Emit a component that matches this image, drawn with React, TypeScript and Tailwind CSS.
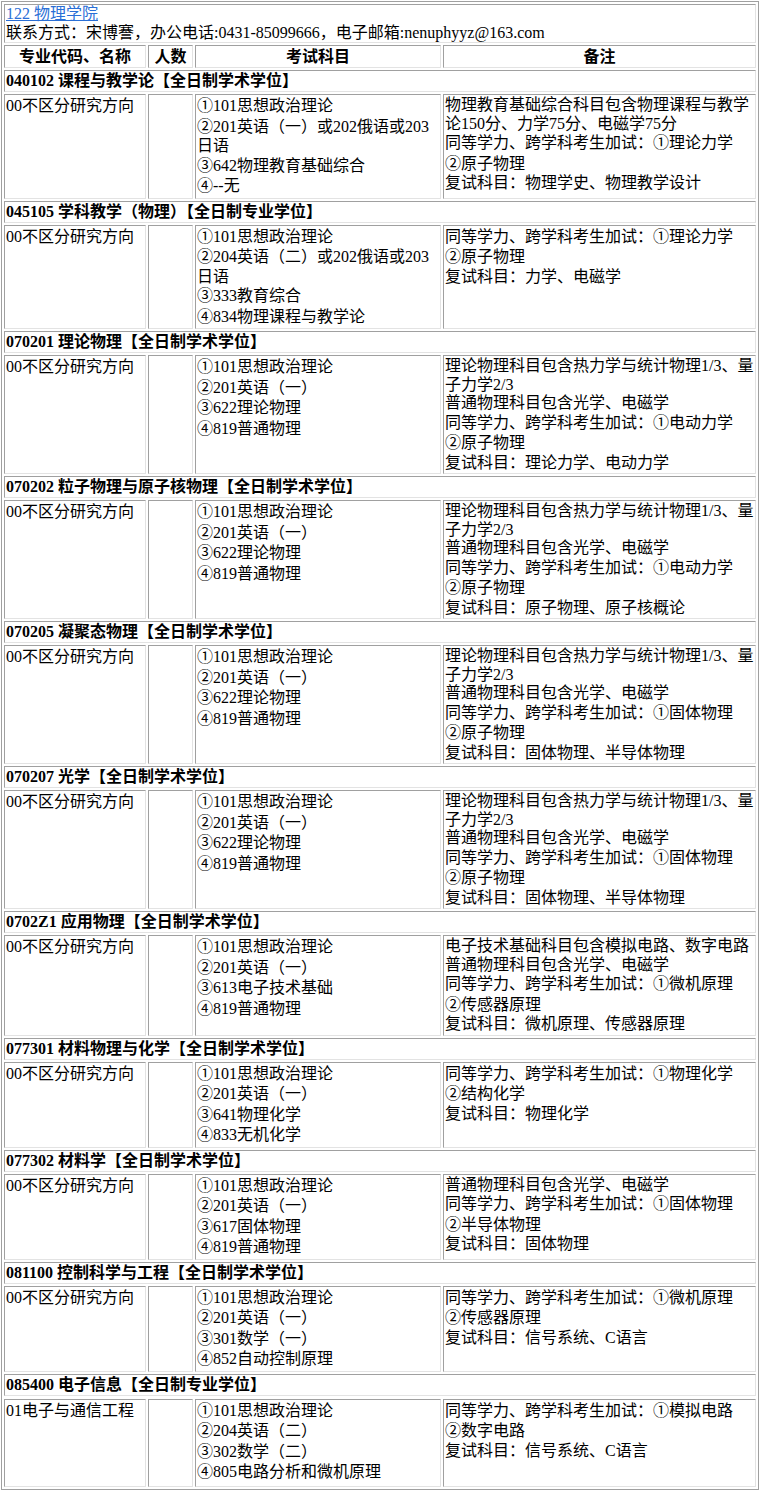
import React from "react";

type Row = {
  title: string;
  dir: string;
  exam: string[];
  note: string[];
};

const std3 = ["①101思想政治理论", "②201英语（一）", "③622理论物理", "④819普通物理"];
const phys3 = [
  "理论物理科目包含热力学与统计物理1/3、量",
  "子力学2/3",
  "普通物理科目包含光学、电磁学",
];

const rows: Row[] = [
  {
    title: "040102 课程与教学论【全日制学术学位】",
    dir: "00不区分研究方向",
    exam: ["①101思想政治理论", "②201英语（一）或202俄语或203", "日语", "③642物理教育基础综合", "④--无"],
    note: [
      "物理教育基础综合科目包含物理课程与教学",
      "论150分、力学75分、电磁学75分",
      "同等学力、跨学科考生加试：①理论力学",
      "②原子物理",
      "复试科目：物理学史、物理教学设计",
    ],
  },
  {
    title: "045105 学科教学（物理）【全日制专业学位】",
    dir: "00不区分研究方向",
    exam: ["①101思想政治理论", "②204英语（二）或202俄语或203", "日语", "③333教育综合", "④834物理课程与教学论"],
    note: ["同等学力、跨学科考生加试：①理论力学", "②原子物理", "复试科目：力学、电磁学"],
  },
  {
    title: "070201 理论物理【全日制学术学位】",
    dir: "00不区分研究方向",
    exam: std3,
    note: [...phys3, "同等学力、跨学科考生加试：①电动力学", "②原子物理", "复试科目：理论力学、电动力学"],
  },
  {
    title: "070202 粒子物理与原子核物理【全日制学术学位】",
    dir: "00不区分研究方向",
    exam: std3,
    note: [...phys3, "同等学力、跨学科考生加试：①电动力学", "②原子物理", "复试科目：原子物理、原子核概论"],
  },
  {
    title: "070205 凝聚态物理【全日制学术学位】",
    dir: "00不区分研究方向",
    exam: std3,
    note: [...phys3, "同等学力、跨学科考生加试：①固体物理", "②原子物理", "复试科目：固体物理、半导体物理"],
  },
  {
    title: "070207 光学【全日制学术学位】",
    dir: "00不区分研究方向",
    exam: std3,
    note: [...phys3, "同等学力、跨学科考生加试：①固体物理", "②原子物理", "复试科目：固体物理、半导体物理"],
  },
  {
    title: "0702Z1 应用物理【全日制学术学位】",
    dir: "00不区分研究方向",
    exam: ["①101思想政治理论", "②201英语（一）", "③613电子技术基础", "④819普通物理"],
    note: [
      "电子技术基础科目包含模拟电路、数字电路",
      "普通物理科目包含光学、电磁学",
      "同等学力、跨学科考生加试：①微机原理",
      "②传感器原理",
      "复试科目：微机原理、传感器原理",
    ],
  },
  {
    title: "077301 材料物理与化学【全日制学术学位】",
    dir: "00不区分研究方向",
    exam: ["①101思想政治理论", "②201英语（一）", "③641物理化学", "④833无机化学"],
    note: ["同等学力、跨学科考生加试：①物理化学", "②结构化学", "复试科目：物理化学"],
  },
  {
    title: "077302 材料学【全日制学术学位】",
    dir: "00不区分研究方向",
    exam: ["①101思想政治理论", "②201英语（一）", "③617固体物理", "④819普通物理"],
    note: ["普通物理科目包含光学、电磁学", "同等学力、跨学科考生加试：①固体物理", "②半导体物理", "复试科目：固体物理"],
  },
  {
    title: "081100 控制科学与工程【全日制学术学位】",
    dir: "00不区分研究方向",
    exam: ["①101思想政治理论", "②201英语（一）", "③301数学（一）", "④852自动控制原理"],
    note: ["同等学力、跨学科考生加试：①微机原理", "②传感器原理", "复试科目：信号系统、C语言"],
  },
  {
    title: "085400 电子信息【全日制专业学位】",
    dir: "01电子与通信工程",
    exam: ["①101思想政治理论", "②204英语（二）", "③302数学（二）", "④805电路分析和微机原理"],
    note: ["同等学力、跨学科考生加试：①模拟电路", "②数字电路", "复试科目：信号系统、C语言"],
  },
];

const cell =
  "border border-t-[#a0a0a0] border-l-[#a0a0a0] border-r-[#e3e3e3] border-b-[#e3e3e3] px-[1px]";

function Lines({ lines }: { lines: string[] }) {
  return (
    <>
      {lines.map((l, i) => (
        <div
          key={i}
          className={
            /[①②③④]/.test(l)
              ? "leading-[20.5px] whitespace-nowrap"
              : "leading-[18.5px] whitespace-nowrap"
          }
        >
          {l}
        </div>
      ))}
    </>
  );
}

export default function App() {
  return (
    <div className="min-h-[1510px] bg-white pt-[1px] pl-[1px] text-black text-[16px] font-['Liberation_Serif','Noto_Sans_CJK_SC',serif]">
      <div className="w-[758px] border border-[#a0a0a0] p-[2px] flex flex-col gap-[2px]">
        <div className={cell}>
          <div className="leading-[18.5px]">
            <a className="text-[#2a6fd6] underline cursor-pointer">122 物理学院</a>
          </div>
          <div className="leading-[18.5px] whitespace-nowrap">
            联系方式：宋博謇，办公电话:0431-85099666，电子邮箱:nenuphyyz@163.com
          </div>
        </div>
        <div className="grid grid-cols-[142px_45px_246px_313px] gap-x-[2px] font-bold text-center">
          <div className={`${cell} leading-[19px] py-[1px]`}>专业代码、名称</div>
          <div className={`${cell} leading-[19px] py-[1px]`}>人数</div>
          <div className={`${cell} leading-[19px] py-[1px]`}>考试科目</div>
          <div className={`${cell} leading-[19px] py-[1px]`}>备注</div>
        </div>
        {rows.map((r, i) => (
          <React.Fragment key={i}>
            <div className={`${cell} font-bold leading-[18px] py-[1px] whitespace-nowrap`}>{r.title}</div>
            <div
              className={
                i === rows.length - 1
                  ? "grid grid-cols-[142px_45px_246px_313px] gap-x-[2px] min-h-[89px] pt-[1px]"
                  : "grid grid-cols-[142px_45px_246px_313px] gap-x-[2px]"
              }
            >
              <div className={`${cell} py-[1px] leading-[20px]`}>{r.dir}</div>
              <div className={`${cell} py-[1px]`}></div>
              <div className={`${cell} py-[1px]`}>
                <Lines lines={r.exam} />
              </div>
              <div className={`${cell} py-[1px]`}>
                <Lines lines={r.note} />
              </div>
            </div>
          </React.Fragment>
        ))}
      </div>
    </div>
  );
}
